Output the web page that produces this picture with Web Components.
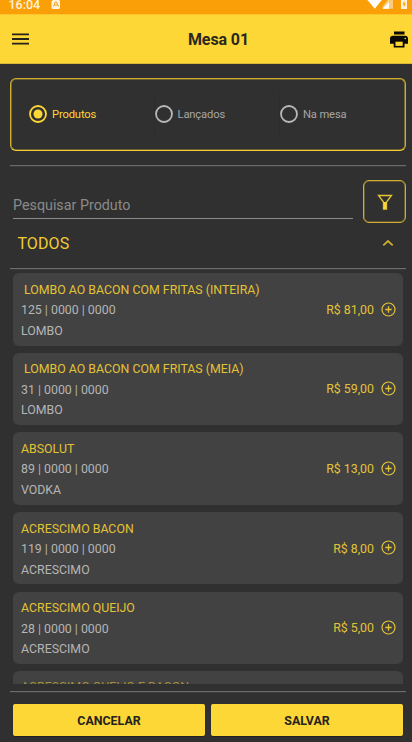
<!DOCTYPE html>
<html lang="pt-BR"><head><meta charset="utf-8"><title>Mesa 01</title>
<style>html,body{margin:0;height:100%;background:#303030;overflow:hidden}</style></head>
<body><order-screen></order-screen>
<script>
const define=(name,html,setup)=>customElements.define(name,class extends HTMLElement{
  connectedCallback(){
    if(this.shadowRoot)return;
    const t=document.createElement('template');
    t.innerHTML='<style>*{box-sizing:border-box}svg{display:block}</style>'+html;
    this.attachShadow({mode:'open'}).append(t.content.cloneNode(true));
    if(setup)setup(this,this.shadowRoot);
  }
});

define('status-bar',`<style>
:host{display:flex;justify-content:space-between;height:14px;background:#fa9f08;color:#fff3df;overflow:hidden}
.l{display:flex;gap:11px;padding-left:8.500px}
.t{font-size:12.500px;font-weight:500;line-height:14px;margin-top:-2px;height:14px}
</style><div class="l"><span class="t">16:04</span>
<svg width="10" height="14"><path d="M2 0h6l1 1v7l-1 1H1.500L.5 8V1.500z" fill="#fff3df"/><path d="M2.500 6.500 4.300 2h1.200l1.900 4.500M3.500 5h3" fill="none" stroke="#fa9f08"/></svg></div>
<svg width="46" height="14"><path d="M1.500-1h14v1.200L8.800 8.800 1.700.2z" fill="#fff"/><path d="M21.500 0H27v8.800H16.500V7z" fill="#fccb79"/><path d="M16.500 8.800 23 2v6.800z" fill="#fff"/><path d="M35-1h6v10h-6z" fill="#fff3df"/><path d="M38.500.5 36.500 4.500h1.300V7.500l2-4h-1.300z" fill="#fa9f08"/></svg>`);

define('app-header',`<style>
:host{display:grid;grid-template-columns:60px 1fr 60px;align-items:center;height:50px;background:#fdd735;border-top:1px solid #fbc62b;border-bottom:1px solid #d9b936;color:#2b2821}
h1{margin:0;font-size:16px;font-weight:700;line-height:20px;letter-spacing:-.1px;text-align:center;padding:2px 0 0 25px}
.m{margin-left:12px}.p{justify-self:end;margin-right:4px}
</style><svg class="m" width="17" height="14"><path d="M0 2.400h17M0 7h17M0 11.600h17" stroke="#25221a" stroke-width="1.800"/></svg>
<h1><slot></slot></h1>
<svg class="p" width="18" height="17" viewBox="0 0 18 17"><path d="M4 .5h10.500v3H4zM3 4.700h12q3 0 3 3v5h-3.500v3.800H3.700v-3.800H0v-5q0-3 3-3z" fill="#0b0a06"/><path d="M5.500 10.700h7.200v4.200H5.500z" fill="#fdd735"/><circle cx="15.200" cy="7.500" r=".8" fill="#fdd735"/></svg>`);

define('radio-option',`<style>
:host{display:flex;align-items:center;gap:5px;width:125.500px;color:#a6a6a6;font-size:11.200px;letter-spacing:-.14px;line-height:16px}
:host([checked]){color:#fdd735;width:124.500px}
:host([divided]){border-left:1px solid #2c2c2c;height:44px}
svg{margin-top:-1px}
circle:last-child{display:none}:host([checked]) circle:last-child{display:block}
circle:first-child{stroke:#b8b8b8}:host([checked]) circle:first-child{stroke:#fdd735}
</style><svg width="18" height="18"><circle cx="9" cy="9" r="8" fill="none" stroke-width="1.800"/><circle cx="9" cy="9" r="4.500" fill="currentColor"/></svg><span><slot></slot></span>`);

define('radio-panel',`<style>
:host{display:flex;align-items:center;height:73px;margin:14px 6px 0 10px;border:1px solid #cdae32;border-bottom-color:#f5d034;box-shadow:inset 0 0 0 .6px #a88f2f;border-radius:6px;padding-left:18px}
</style><slot></slot>`);

define('rule-line',`<style>:host{display:block;height:1px;background:#6b6b6b;box-shadow:0 1px #3b3b3b;margin:0 6px 0 10px;flex:none}</style>`);

define('search-row',`<style>
:host{display:flex;justify-content:space-between;height:43px;margin:14px 6px 0 13px}
.f{width:340px;height:39px;border-bottom:1px solid #8b8b8b;color:#8a8a8a;font-size:14.300px;line-height:20px;padding-top:15.400px}
.b{width:43px;height:43px;border:1px solid #cdae32;box-shadow:inset 0 0 0 .6px #8a7731;border-radius:6px;display:grid;place-items:center}
</style><div class="f"><slot></slot></div><div class="b"><svg width="16" height="16"><path d="M1.500 1.500h13L9.500 8v7h-3V8z" fill="none" stroke="#e6c433" stroke-width="1.300"/><path d="M8 8v7" stroke="#fdd735" stroke-width="2.200"/></svg></div>`);

define('group-title',`<style>
:host{display:flex;align-items:center;justify-content:space-between;height:45px;padding:0 18px 4px 17.400px;color:#f0cd34;font-size:16px;letter-spacing:.1px;line-height:20px}
svg{margin-top:-1px}
</style><span><slot></slot></span><svg width="12" height="8"><path d="M1.300 6.300 6 2l4.700 4.300" fill="none" stroke="#cdae32" stroke-width="1.700"/></svg>`);

define('product-card',`<style>
:host{display:flex;justify-content:space-between;align-items:center;flex:none;height:72.500px;border-radius:6px;background:#424242;padding:0 7px 0 8px;font-size:12.350px;color:#b5b5b5}
.i{line-height:20.500px;padding-top:2.300px;white-space:pre}
.n,.r{color:#e3c336}
.r{display:flex;align-items:center;gap:7px}
.v{padding-top:1px}
svg{margin-top:-.500px}
:host([partial]){align-items:flex-start;height:14px;border-radius:6px 6px 0 0}
:host([partial]) .r,:host([partial]) .c,:host([partial]) .g{display:none}
:host([partial]) .i{padding-top:6px}
:host([partial]) .n{color:#a38f38}
</style><div class="i"><div class="n"><slot></slot></div><div class="c"></div><div class="g"></div></div>
<div class="r"><span class="v"></span><svg width="15" height="15"><circle cx="7.500" cy="7.500" r="6.500" fill="none" stroke="currentColor" stroke-width="1.200"/><path d="M4.300 7.500h6.400M7.500 4.300v6.400" stroke="currentColor" stroke-width="1.300"/></svg></div>`,
(h,s)=>{if(h.hasAttribute('partial'))return;s.querySelector('.c').textContent=h.getAttribute('code')+' | 0000 | 0000';s.querySelector('.g').textContent=h.getAttribute('group');s.querySelector('.v').textContent='R$ '+h.getAttribute('price');});

define('product-list',`<style>:host{display:flex;flex-direction:column;gap:7.170px;height:414.500px;padding:4px 9px 0 13px;overflow:hidden}</style><slot></slot>`);

define('action-button',`<style>
:host{display:grid;place-items:center;flex:1;height:32px;background:#fdd735;border-radius:2px;box-shadow:0 1px 1px #222;color:#25231d;font-size:12.400px;font-weight:700}
</style><span><slot></slot></span>`);

define('action-bar',`<style>:host{display:flex;gap:6px;padding:12.400px 9px 0 13px}</style><slot></slot>`);

define('order-screen',`<style>
:host{display:flex;flex-direction:column;width:412px;height:742px;background:#303030;font-family:Roboto,sans-serif;overflow:hidden}
:host>*{flex:none}
.a{margin-top:14px}.b{margin-top:7.500px}
</style>
<status-bar></status-bar><app-header>Mesa 01</app-header>
<radio-panel><radio-option checked>Produtos</radio-option><radio-option divided>Lançados</radio-option><radio-option divided>Na mesa</radio-option></radio-panel>
<rule-line class="a"></rule-line>
<search-row>Pesquisar Produto</search-row>
<group-title>TODOS</group-title><rule-line></rule-line>
<product-list>
<product-card code="125" group="LOMBO" price="81,00">&nbsp;LOMBO AO BACON COM FRITAS (INTEIRA)</product-card>
<product-card code="31" group="LOMBO" price="59,00">&nbsp;LOMBO AO BACON COM FRITAS (MEIA)</product-card>
<product-card code="89" group="VODKA" price="13,00">ABSOLUT</product-card>
<product-card code="119" group="ACRESCIMO" price="8,00">ACRESCIMO BACON</product-card>
<product-card code="28" group="ACRESCIMO" price="5,00">ACRESCIMO QUEIJO</product-card>
<product-card partial>ACRESCIMO QUEIJO E BACON</product-card>
</product-list>
<rule-line class="b"></rule-line>
<action-bar><action-button>CANCELAR</action-button><action-button>SALVAR</action-button></action-bar>`);
</script></body></html>
